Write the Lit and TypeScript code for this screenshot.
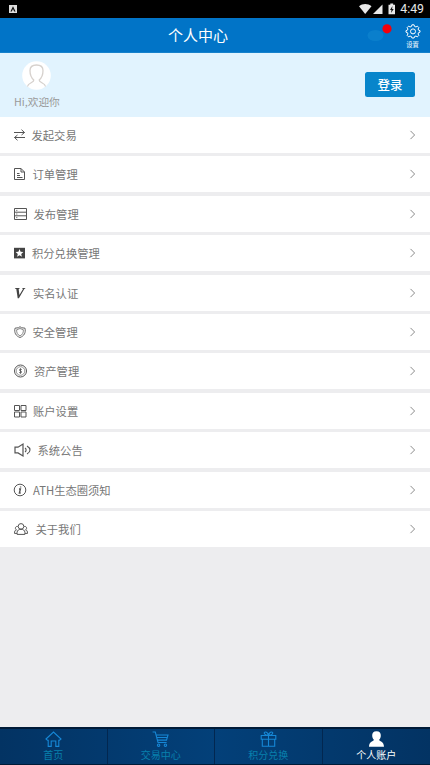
import { LitElement, html, css, svg } from "lit";
import { customElement } from "lit/decorators.js";
import { classMap } from "lit/directives/class-map.js";

const ROWS = [
  { label: "发起交易", w: 11, gap: 7, icon: svg`<path d="M0 3.5H10.5M7.5 .7L10.5 3.5L7.5 6M11 8.5H.5M3.5 11.3L.5 8.5L3.5 6"/>` },
  { label: "订单管理", w: 11, gap: 8, icon: svg`<path d="M.5 .5H7L10.5 4V11.5H.5ZM7 .5V4H10.5M3 5.5H5.5M3 7.5H6M3 9.5H8.5"/>` },
  { label: "发布管理", w: 13, gap: 7, icon: svg`<path d="M.5 .5H12.5V11.5H.5ZM.5 4.2H12.5M.5 7.8H12.5M2.3 2.4H3.3M2.3 6H3.3M2.3 9.6H3.3"/>` },
  { label: "积分兑换管理", w: 11, gap: 7.5, icon: svg`<path fill="#444" stroke="none" d="M0 .8H11V11.4H0Z"/><path fill="#fff" stroke="none" d="M5.5 2L6.6 4.8L9.4 5L7.2 6.9L7.9 9.7L5.5 8.2L3.1 9.7L3.8 6.9L1.6 5L4.4 4.8Z"/>` },
  { label: "实名认证", w: 11, gap: 8.5, icon: svg`<path fill="#444" stroke="none" d="M1 .9H5.8L5.6 1.6L4.7 1.9L5.4 8.1L9 2L8.2 1.6L8.4.9H11.4L11.2 1.5L10.3 2L4.9 11.2H3.7L2.3 2L.9 1.6Z"/>` },
  { label: "安全管理", w: 12, gap: 7, icon: svg`<path stroke-width=".9" d="M6 .7L7.5 1.7L11 2.2C11.9 6.5 10.4 9.9 6 11.5C1.6 9.9 .1 6.5 1 2.2L4.5 1.7Z"/><path stroke-width=".7" d="M6 2.5L9.3 3.7C9.6 6.7 8.6 8.7 6 9.9C3.4 8.7 2.4 6.7 2.7 3.7Z"/>` },
  { label: "资产管理", w: 13, gap: 7.5, icon: svg`<circle cx="6.5" cy="6" r="6"/><circle cx="6.5" cy="6" r="4.3" stroke-width=".6"/><path stroke-width=".9" d="M7.8 4.7C7.2 4 5.4 4 5.4 5C5.4 6.1 7.6 5.8 7.6 7C7.6 8 5.8 8.1 5.1 7.3M6.5 3.3V8.7"/>` },
  { label: "账户设置", w: 12, gap: 7.5, icon: svg`<path d="M.5 .5H5.5V5.5H.5ZM7 .5H12V5.5H7ZM.5 7H5.5V12H.5ZM7 7H12V12H7Z"/>` },
  { label: "系统公告", w: 17, gap: 7, icon: svg`<path stroke-width="1.2" d="M1 3.2H4L9 0V12L4 8.9H1Z"/><path stroke-width="1.1" d="M11 4C12.5 5 12.5 7 11 8M13 2C17 4.2 17 7.8 13 10"/>` },
  { label: "ATH生态圈须知", w: 12, gap: 7.5, icon: svg`<circle cx="6" cy="6" r="5.8"/><path stroke-width="1.4" d="M5 5H6.4L5.4 9H6.7M6.6 2.6V3.6"/>` },
  { label: "关于我们", w: 14, gap: 8, icon: svg`<circle cx="7" cy="3.4" r="2.8"/><path d="M3.1 11.4V9.3C3.1 7.3 5 6.3 7 6.3S10.9 7.3 10.9 9.3V11.4ZM3.8 3.4C1 3.1 .8 6 2.4 6.8C.8 7.3 .5 8.5 .5 10.4H3M10.2 3.4C13 3.1 13.2 6 11.6 6.8C13.2 7.3 13.5 8.5 13.5 10.4H11"/>` },
];

const TABS = [
  { label: "首页", icon: svg`<path d="M1 8L8.5 1L16 8L14.6 9.2H13.8V15.4H10.8V10H6.2V15.4H3.2V9.2H2.4Z"/>` },
  { label: "交易中心", icon: svg`<path d="M.6 1H3.3L6 11.5H14.6M4.1 4H16L14.5 9.1H5.5M5 6.5H15"/><circle cx="6.6" cy="14.2" r="1.2"/><circle cx="13.4" cy="14.2" r="1.2"/>` },
  { label: "积分兑换", icon: svg`<path d="M1.2 4.5H15.8V8.2H1.2ZM2.3 8.2H14.7V15.3H2.3ZM8.5 4.5V15.3M8.5 4.3C4 4.4 3.2 1 5.5 1C7.2 1 8.1 2.7 8.5 4.3C8.9 2.7 9.8 1 11.5 1C13.8 1 13 4.4 8.5 4.3"/>` },
  { label: "个人账户", active: true, icon: svg`<path fill="#fff" stroke="none" d="M8.5.3C11.6.3 13 2.4 12.8 4.9C12.6 6.8 12 8 11 8.7C11.2 10.4 16 10.3 16 15.7H1C1 10.3 5.8 10.4 6 8.7C5 8 4.4 6.8 4.2 4.9C4 2.4 5.4.3 8.5.3Z"/>` },
];

@customElement("app-root")
export class AppRoot extends LitElement {
  static styles = css`
    :host {
      display: flex;
      flex-direction: column;
      height: 765px;
      overflow: hidden;
      background: #ededef;
      font-family: "Noto Sans CJK SC", sans-serif;
      color: #777;
    }
    * { box-sizing: border-box; }
    svg { display: block; flex: none; fill: none; stroke: #555; overflow: visible; }
    .status {
      height: 18px;
      background: #000;
      display: flex;
      align-items: center;
      padding: 0 6px 0 9px;
      color: #e8e8e8;
      font: 12.3px/18px Roboto, sans-serif;
    }
    .status .signals { margin-left: auto; margin-right: 5px; }
    .header {
      height: 35px;
      background: #0174c7;
      display: grid;
      grid-template-columns: 1fr auto 1fr;
      align-items: center;
      border-bottom: 1px solid #1681cb;
      color: #fff;
    }
    .title { grid-column: 2; font-size: 15px; line-height: 34px; margin-right: 34px; }
    .tools { display: flex; justify-content: flex-end; gap: 13px; padding-right: 10.5px; }
    .settings { display: flex; flex-direction: column; align-items: center; font-size: 6.3px; line-height: 8px; gap: 3px; padding-top: 2px; }
    .settings svg { stroke: #fff; }
    .profile {
      height: 64px;
      background: #e1f3fe;
      display: flex;
      justify-content: space-between;
      padding: 8px 15px 0 14px;
    }
    .avatar { margin-left: 8px; }
    .hello { font-size: 10.7px; line-height: 15px; margin-top: 4px; color: #999; }
    .login {
      margin-top: 11px;
      width: 50px;
      height: 25px;
      border-radius: 2.5px;
      background: #0785cb;
      color: #fff;
      font-size: 12.5px;
      font-weight: 500;
      line-height: 25px;
      text-align: center;
    }
    .list { flex: 1; display: flex; flex-direction: column; gap: 3.4px; }
    .row {
      height: 36px;
      background: #fff;
      display: flex;
      align-items: center;
      padding: 0 15px 0 14px;
      font-size: 11.3px;
      line-height: 16px;
    }
    .label { margin-left: var(--gap); }
    .row .chevron { margin-left: auto; stroke: #8c8c8c; }
    .tabs {
      height: 38px;
      border-top: 2px solid #001b38;
      border-bottom: 1px solid #001b38;
      display: grid;
      grid-template-columns: repeat(4, 1fr);
      background: linear-gradient(90deg, #033363, #034079 50%, #033363);
    }
    .tab {
      display: flex;
      flex-direction: column;
      align-items: center;
      border-right: 1px solid #022750;
      padding-top: 2px;
      font-size: 10px;
      line-height: 14px;
      color: #0880ad;
    }
    .tab:last-child { border-right: none; }
    .tab svg { stroke: #1687d6; stroke-width: 1.1; }
    .tab.active { color: #fff; }
  `;

  render() {
    return html`
      <div class="status">
        <svg width="8" height="8"><path fill="#ddd" stroke="none" d="M0 0H8V8H0Z"/><path fill="#111" stroke="none" d="M4 1.2L6.6 6.5H5.2L4 4L2.8 6.5H1.4Z"/></svg>
        <svg class="signals" width="36" height="12">
          <path fill="#e8e8e8" stroke="none" d="M0 3.3C3.5.3 9 .3 12.5 3.3L6.2 11Z"/>
          <path fill="#e8e8e8" stroke="none" d="M14 11L23.5 1.5V11Z"/>
          <path fill="#e8e8e8" stroke="none" d="M29.5 1.7H31.3V.5H34.2V1.7H36V11.2H29.5Z"/>
          <path fill="#111" stroke="none" d="M33.5 3L31 7H32.5L32 10L34.7 6H33.1Z"/>
        </svg>
        <span>4:49</span>
      </div>
      <div class="header">
        <div class="title">个人中心</div>
        <div class="tools">
          <svg class="message" width="26" height="22">
            <ellipse cx="8.5" cy="13.5" rx="8" ry="5.5" fill="#0a7fcc" stroke="none"/>
            <circle cx="20" cy="6.8" r="4.6" fill="#f5000b" stroke="none"/>
          </svg>
          <div class="settings">
            <svg width="14" height="14"><path d="M5.9.8H8.1L8.5 2.4L10 3L11.3 2.1L12.9 3.7L12 5L12.6 6.2L14 6.6V8.2L12.6 8.6L12 10L12.9 11.3L11.3 12.9L10 12L8.5 12.6L8.1 14H5.9L5.5 12.6L4 12L2.7 12.9L1.1 11.3L2 10L1.4 8.6L0 8.2V6.6L1.4 6.2L2 5L1.1 3.7L2.7 2.1L4 3L5.5 2.4Z"/><circle cx="7" cy="7.4" r="2.5"/></svg>
            <span>设置</span>
          </div>
        </div>
      </div>
      <div class="profile">
        <div>
          <svg class="avatar" width="29" height="29">
            <circle cx="14.5" cy="14.5" r="14.3" fill="#fff" stroke="none"/>
            <path stroke="#d6d1cd" stroke-width="1.3" d="M5.5 25.5C6 21.5 12 22 11.8 19C8.8 16.5 8 13 8 9.5C8 6 10.5 4 14.5 4S21 6 21 9.5C21 13 20.2 16.5 17.2 19C17 22 23 21.5 23.5 25.5"/>
          </svg>
          <div class="hello">Hi,欢迎你</div>
        </div>
        <div class="login">登录</div>
      </div>
      <div class="list">
        ${ROWS.map((r) => html`
          <div class="row" style="--gap:${r.gap - 0.5}px">
            <svg width=${r.w} height="12">${r.icon}</svg>
            <span class="label">${r.label}</span>
            <svg class="chevron" width="5" height="8"><path d="M.5 -.1L4.6 4L.5 8.1"/></svg>
          </div>`)}
      </div>
      <div class="tabs">
        ${TABS.map((t) => html`
          <div class=${classMap({ tab: true, active: !!t.active })}>
            <svg width="17" height="17">${t.icon}</svg>
            <span>${t.label}</span>
          </div>`)}
      </div>
    `;
  }
}
